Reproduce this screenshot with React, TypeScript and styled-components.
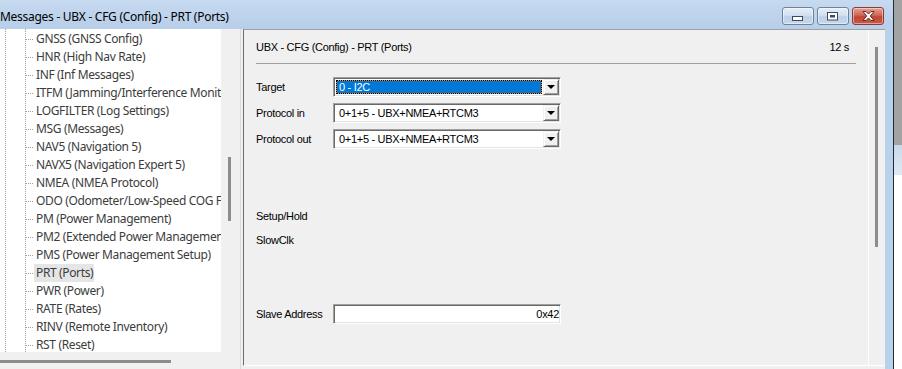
import React from "react";
import styled, { createGlobalStyle } from "styled-components";

const Global = createGlobalStyle`
  html, body { margin: 0; padding: 0; background: #f0f0f0; overflow: hidden; }
  #root { width: 902px; height: 369px; }
`;

const Screen = styled.div`
  width: 902px;
  height: 369px;
  display: flex;
  overflow: hidden;
`;

const Window = styled.div`
  width: 894px;
  flex: none;
  box-sizing: border-box;
  display: flex;
  flex-direction: column;
  border-right: 1px solid #1e2b3b;
  background: #b9d1ea;
`;

const Backdrop = styled.div`
  flex: 1;
  display: flex;
  flex-direction: column;
`;

const BackdropBand = styled.div<{ $h?: number; $bg: string }>`
  height: ${(p) => (p.$h ? `${p.$h}px` : "auto")};
  flex: ${(p) => (p.$h ? "none" : 1)};
  background: ${(p) => p.$bg};
`;

const TitleBar = styled.div`
  height: 29px;
  flex: none;
  display: flex;
  align-items: center;
  padding-right: 9px;
  background: linear-gradient(#c6daf0, #b7cee9);
`;

const TitleText = styled.div`
  font-family: "Noto Sans", sans-serif;
  font-size: 12px;
  letter-spacing: -0.28px;
  color: #000;
  white-space: nowrap;
  padding-top: 4px;
`;

const Caption = styled.div`
  margin-left: auto;
  align-self: flex-start;
  margin-top: 7px;
  display: flex;
  gap: 3px;
`;

const CapButton = styled.div<{ $close?: boolean }>`
  width: 32px;
  height: 18px;
  box-sizing: border-box;
  border-radius: 3px;
  display: flex;
  align-items: center;
  justify-content: center;
  border: 1px solid ${(p) => (p.$close ? "#8a3b32" : "#70829a")};
  background: ${(p) =>
    p.$close
      ? "linear-gradient(#e3a396, #cf6656 45%, #c14533 55%, #c85a44)"
      : "linear-gradient(#e6eef8, #d2e0f1 45%, #bcd0e9 55%, #c7d8ee)"};
  box-shadow: inset 0 0 0 1px rgba(255, 255, 255, 0.45);
`;

const Body = styled.div`
  flex: 1;
  display: flex;
  padding-right: 8px;
  min-height: 0;
`;

const Content = styled.div`
  flex: 1;
  display: flex;
  background: #f0f0f0;
  min-width: 0;
`;

const TreePane = styled.div`
  width: 240px;
  flex: none;
  display: flex;
  flex-direction: column;
`;

const TreeTop = styled.div`
  flex: 1;
  display: flex;
  min-height: 0;
`;

const TreeList = styled.div`
  width: 221px;
  flex: none;
  overflow: hidden;
  background:
    linear-gradient(#a0a0a0 50%, transparent 50%) 5px 0 / 1px 2px repeat-y,
    linear-gradient(#a0a0a0 50%, transparent 50%) 25px 0 / 1px 2px repeat-y,
    #ffffff;
  display: flex;
  flex-direction: column;
  padding-top: 1px;
`;

const TreeRow = styled.div`
  height: 18px;
  flex: none;
  display: flex;
  align-items: center;
  padding-left: 26px;
  white-space: nowrap;
`;

const Branch = styled.span`
  width: 8px;
  height: 1px;
  flex: none;
  background: linear-gradient(to right, #a0a0a0 50%, transparent 50%) 0 0 / 2px 1px repeat-x;
`;

const TreeLabel = styled.span<{ $selected?: boolean }>`
  font-family: "Noto Sans", sans-serif;
  font-size: 12px;
  letter-spacing: -0.36px;
  color: #3c3c3c;
  line-height: 18px;
  padding: 0 1px 0 2px;
  background: ${(p) => (p.$selected ? "#e5e5e5" : "transparent")};
`;

const VScroll = styled.div`
  flex: 1;
  padding: 128px 0 0 7px;
`;

const Thumb = styled.div<{ $w: number; $h: number }>`
  width: ${(p) => p.$w}px;
  height: ${(p) => p.$h}px;
  background: #8c8c8c;
`;

const HScroll = styled.div`
  height: 17px;
  flex: none;
  padding-top: 8px;
  box-sizing: border-box;
`;

const Splitter = styled.div`
  width: 3px;
  flex: none;
  box-sizing: border-box;
  border-left: 1px solid #dadada;
`;

const RightArea = styled.div`
  flex: 1;
  display: flex;
  flex-direction: column;
  min-width: 0;
`;

const Panel = styled.div`
  height: 337px;
  flex: none;
  box-sizing: border-box;
  display: flex;
  border-top: 1px solid #a0a0a0;
  border-left: 1px solid #6d6d6d;
  border-bottom: 1px solid #ffffff;
`;

const Form = styled.div`
  flex: 1;
  display: flex;
  flex-direction: column;
  font-family: "Liberation Sans", Arial, sans-serif;
  font-size: 11px;
  letter-spacing: -0.3px;
  color: #000;
`;

const Gutter = styled.div`
  width: 17px;
  flex: none;
  border-left: 1px solid #ffffff;
  padding: 17px 0 0 6px;
  box-sizing: border-box;
`;

const Header = styled.div`
  height: 33px;
  flex: none;
  display: flex;
  align-items: center;
  justify-content: space-between;
  padding: 0 19px 0 12px;
`;

const Rule = styled.div`
  height: 1px;
  flex: none;
  margin: 0 12px;
  background: #a0a0a0;
`;

const Field = styled.div<{ $mt: number }>`
  height: 20px;
  flex: none;
  display: flex;
  align-items: center;
  margin-top: ${(p) => p.$mt}px;
  padding-left: 12px;
`;

const Label = styled.div`
  width: 77px;
  flex: none;
  white-space: nowrap;
`;

const Sunken = styled.div`
  width: 228px;
  height: 20px;
  box-sizing: border-box;
  display: flex;
  align-items: stretch;
  padding: 1px;
  background: #ffffff;
  border: 1px solid;
  border-color: #a0a0a0 #ffffff #ffffff #a0a0a0;
  box-shadow: inset 1px 1px 0 #696969, inset -1px -1px 0 #e3e3e3;
`;

const Value = styled.div<{ $selected?: boolean; $right?: boolean }>`
  flex: 1;
  display: flex;
  align-items: center;
  justify-content: ${(p) => (p.$right ? "flex-end" : "flex-start")};
  padding: ${(p) => (p.$right ? "0 0 0 2px" : "0 2px")};
  margin: ${(p) => (p.$right ? "1px 0 1px 1px" : "1px")};
  white-space: nowrap;
  border: ${(p) => (p.$right ? "0" : "1px")} ${(p) => (p.$selected ? "dotted #000" : "solid transparent")};
  color: ${(p) => (p.$selected ? "#ffffff" : "#000")};
  background: ${(p) =>
    p.$selected
      ? "linear-gradient(#0078d7, #0078d7) padding-box, linear-gradient(#ff8728, #ff8728) border-box"
      : "transparent"};
`;

const DropButton = styled.div`
  width: 16px;
  flex: none;
  box-sizing: border-box;
  display: flex;
  align-items: center;
  justify-content: center;
  background: #f0f0f0;
  border: 1px solid;
  border-color: #f0f0f0 #696969 #696969 #f0f0f0;
  box-shadow: inset 1px 1px 0 #ffffff, inset -1px -1px 0 #a0a0a0;
`;

const Caret = styled.div`
  width: 0;
  height: 0;
  border-left: 4px solid transparent;
  border-right: 4px solid transparent;
  border-top: 4px solid #000;
`;

const Text = styled.div<{ $mt: number }>`
  height: 20px;
  flex: none;
  display: flex;
  align-items: center;
  padding-left: 12px;
  margin-top: ${(p) => p.$mt}px;
`;

const BottomStrip = styled.div`
  flex: 1;
`;

const treeItems = [
  "GNSS (GNSS Config)",
  "HNR (High Nav Rate)",
  "INF (Inf Messages)",
  "ITFM (Jamming/Interference Monitor)",
  "LOGFILTER (Log Settings)",
  "MSG (Messages)",
  "NAV5 (Navigation 5)",
  "NAVX5 (Navigation Expert 5)",
  "NMEA (NMEA Protocol)",
  "ODO (Odometer/Low-Speed COG Filter)",
  "PM (Power Management)",
  "PM2 (Extended Power Management)",
  "PMS (Power Management Setup)",
  "PRT (Ports)",
  "PWR (Power)",
  "RATE (Rates)",
  "RINV (Remote Inventory)",
  "RST (Reset)",
];

const MinIcon = () => (
  <svg width="12" height="6" viewBox="0 0 12 6" style={{ marginTop: 6 }}>
    <rect x="0.5" y="0.5" width="10" height="4" fill="#fff" stroke="#3b4a5c" />
  </svg>
);

const MaxIcon = () => (
  <svg width="12" height="9" viewBox="0 0 12 9">
    <rect x="0.5" y="0.5" width="10" height="7.5" fill="#fff" stroke="#3b4a5c" />
    <rect x="3" y="3" width="5" height="2.5" fill="#3b4a5c" />
  </svg>
);

const CloseIcon = () => (
  <svg width="13" height="10" viewBox="0 0 13 10">
    <path
      d="M1 0.5 L4 0.5 L6.5 3 L9 0.5 L12 0.5 L8.3 5 L12 9.5 L9 9.5 L6.5 7 L4 9.5 L1 9.5 L4.7 5 Z"
      fill="#fff"
      stroke="#5a1e16"
      strokeWidth="0.9"
      strokeLinejoin="round"
    />
  </svg>
);

const Combo = ({ value, selected }: { value: string; selected?: boolean }) => (
  <Sunken>
    <Value $selected={selected}>{value}</Value>
    <DropButton>
      <Caret />
    </DropButton>
  </Sunken>
);

export default function App() {
  return (
    <>
      <Global />
      <Screen>
        <Window>
          <TitleBar>
            <TitleText>Messages - UBX - CFG (Config) - PRT (Ports)</TitleText>
            <Caption>
              <CapButton>
                <MinIcon />
              </CapButton>
              <CapButton>
                <MaxIcon />
              </CapButton>
              <CapButton $close>
                <CloseIcon />
              </CapButton>
            </Caption>
          </TitleBar>
          <Body>
            <Content>
              <TreePane>
                <TreeTop>
                  <TreeList>
                    {treeItems.map((t) => (
                      <TreeRow key={t}>
                        <Branch />
                        <TreeLabel $selected={t === "PRT (Ports)"}>{t}</TreeLabel>
                      </TreeRow>
                    ))}
                  </TreeList>
                  <VScroll>
                    <Thumb $w={3} $h={64} />
                  </VScroll>
                </TreeTop>
                <HScroll>
                  <Thumb $w={171} $h={3} />
                </HScroll>
              </TreePane>
              <Splitter />
              <RightArea>
                <Panel>
                  <Form>
                    <Header>
                      <span>UBX - CFG (Config) - PRT (Ports)</span>
                      <span>12 s</span>
                    </Header>
                    <Rule />
                    <Field $mt={13}>
                      <Label>Target</Label>
                      <Combo value="0 - I2C" selected />
                    </Field>
                    <Field $mt={6}>
                      <Label>Protocol in</Label>
                      <Combo value="0+1+5 - UBX+NMEA+RTCM3" />
                    </Field>
                    <Field $mt={6}>
                      <Label>Protocol out</Label>
                      <Combo value="0+1+5 - UBX+NMEA+RTCM3" />
                    </Field>
                    <Text $mt={57}>Setup/Hold</Text>
                    <Text $mt={4}>SlowClk</Text>
                    <Field $mt={54}>
                      <Label>Slave Address</Label>
                      <Sunken>
                        <Value $right>0x42</Value>
                      </Sunken>
                    </Field>
                  </Form>
                  <Gutter>
                    <Thumb $w={3} $h={200} />
                  </Gutter>
                </Panel>
                <BottomStrip />
              </RightArea>
            </Content>
          </Body>
        </Window>
        <Backdrop>
          <BackdropBand $h={145} $bg="#a3a3a3" />
          <BackdropBand $h={30} $bg="linear-gradient(#c9d9ea, #dfe9f4)" />
          <BackdropBand $bg="#ffffff" />
        </Backdrop>
      </Screen>
    </>
  );
}
